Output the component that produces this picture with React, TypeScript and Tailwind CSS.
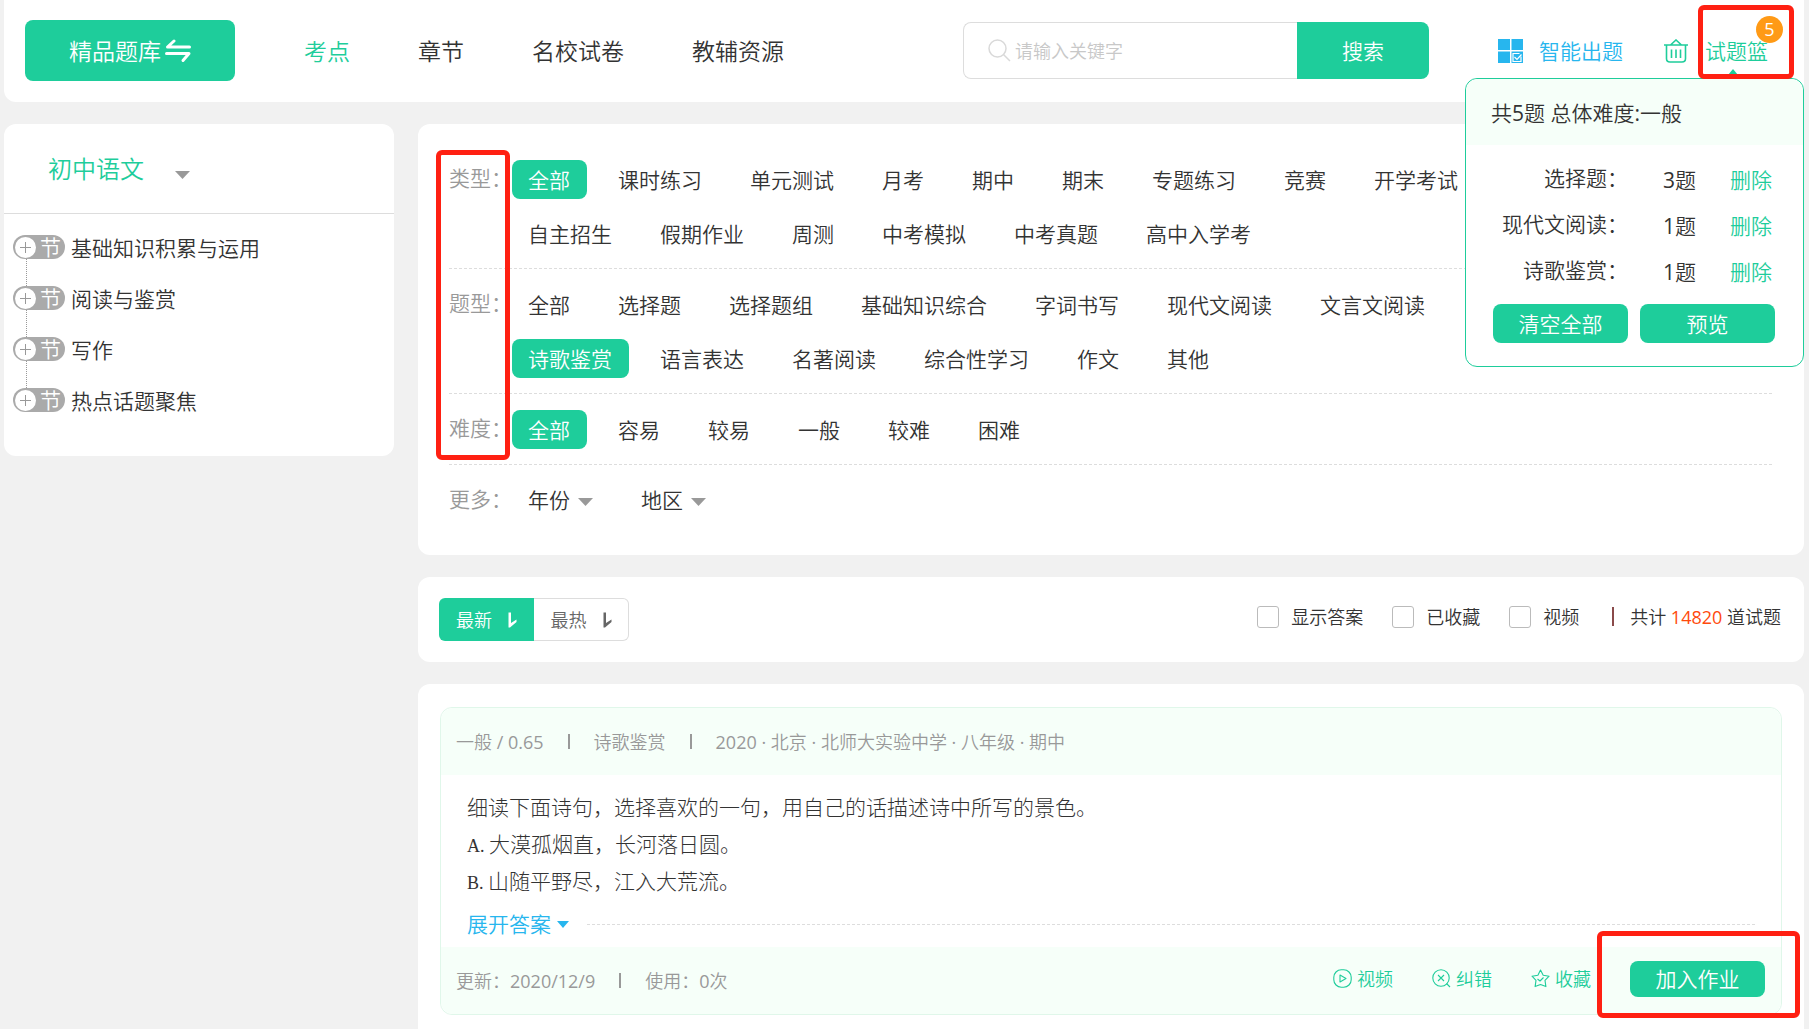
import { useState } from 'react'
import clsx from 'clsx'

interface FilterGroup {
  label: string
  options: string[]
  initial: string
}

const navItems = ['考点', '章节', '名校试卷', '教辅资源']

const chapters = ['基础知识积累与运用', '阅读与鉴赏', '写作', '热点话题聚焦']

const filterGroups: FilterGroup[] = [
  {
    label: '类型',
    options: [
      '全部', '课时练习', '单元测试', '月考', '期中', '期末', '专题练习', '竞赛', '开学考试',
      '自主招生', '假期作业', '周测', '中考模拟', '中考真题', '高中入学考',
    ],
    initial: '全部',
  },
  {
    label: '题型',
    options: [
      '全部', '选择题', '选择题组', '基础知识综合', '字词书写', '现代文阅读', '文言文阅读',
      '诗歌鉴赏', '语言表达', '名著阅读', '综合性学习', '作文', '其他',
    ],
    initial: '诗歌鉴赏',
  },
  {
    label: '难度',
    options: ['全部', '容易', '较易', '一般', '较难', '困难'],
    initial: '全部',
  },
]

const basketRows = [
  { name: '选择题', count: 3 },
  { name: '现代文阅读', count: 1 },
  { name: '诗歌鉴赏', count: 1 },
]

function Caret({ className }: { className?: string }) {
  return (
    <svg viewBox="0 0 15 8" className={clsx('pointer-events-none h-2 w-[15px] fill-[#999]', className)}>
      <path d="M0 0h15L7.500 8z" />
    </svg>
  )
}

function SwapIcon() {
  return (
    <svg viewBox="0 0 26 24" className="h-6 w-[26px]" fill="none" stroke="#fff" strokeWidth="3" strokeLinecap="round">
      <path d="M24.500 8H2.500L9 2" strokeLinejoin="round" />
      <path d="M1.500 14.500H24L18 21.500" strokeLinejoin="round" />
    </svg>
  )
}

function SearchIcon() {
  return (
    <svg viewBox="0 0 23 23" className="size-[23px]" fill="none" stroke="#d9d9d9" strokeWidth="1.500">
      <circle cx="9.500" cy="9.500" r="8.500" />
      <path d="M15.500 15.500l6.500 6.500" />
    </svg>
  )
}

function GridIcon() {
  return (
    <svg viewBox="0 0 25 24" className="h-6 w-[25px]" fill="#27b6ee">
      <path d="M0 0h12v11H0zM13.500 0H25v11H13.500zM0 12.500h12V24H0zM13.500 12.500H25V24H13.500z" />
      <path d="M21.500 14.500h-6.500v8h8v-5" fill="none" stroke="#fff" strokeWidth="1.200" />
      <path d="M16.500 18l2.500 2.500 4.500-5" fill="none" stroke="#fff" strokeWidth="1.200" />
    </svg>
  )
}

function BasketIcon() {
  return (
    <svg viewBox="0 0 24 24" className="size-6" fill="none" stroke="#1ecd9b" strokeWidth="1.600">
      <path d="M0 6h24M6.500 6L12 1l5.500 5" />
      <path d="M2.500 6v13.500q0 3.500 3.500 3.500h12q3.500 0 3.500-3.500V6M7.500 10.500v8.500M12 10.500v8.500M16.500 10.500v8.500" />
    </svg>
  )
}

function SortIcon() {
  return (
    <svg viewBox="0 0 9 16" className="h-4 w-[9px]" fill="currentColor">
      <path d="M0.500 0.500h2.500v10.500l5.500-3.500v2.500L2 15.500H0.500z" />
    </svg>
  )
}

function VideoIcon() {
  return (
    <svg viewBox="0 0 19 19" className="size-[19px]" fill="none" stroke="currentColor" strokeWidth="1.100">
      <rect x="0.800" y="0.800" width="17.400" height="17.400" rx="7.500" />
      <path d="M7 6l6 3.500L7 13z" strokeLinejoin="round" />
    </svg>
  )
}

function ErrorIcon() {
  return (
    <svg viewBox="0 0 19 19" className="size-[19px]" fill="none" stroke="currentColor" strokeWidth="1.100">
      <circle cx="9" cy="9" r="8.200" />
      <path d="M6 6l6 6M12 6l-6 6M14.500 14.500l3.500 3.500" />
    </svg>
  )
}

function StarIcon() {
  return (
    <svg viewBox="0 0 19 19" className="size-[19px]" fill="none" stroke="currentColor" strokeWidth="1.100" strokeLinejoin="round">
      <path d="M9.500 1l2.700 5.200 5.900 1-4.100 4.200.9 6.200-5.400-2-5.400 2 .9-6.200L1 7.200l5.900-1z" />
      <path d="M6.500 10l2.500 2 3.500-3.500" />
    </svg>
  )
}

function Dropdown({ name, options }: { name: string; options: string[] }) {
  return (
    <div className="relative flex items-center">
      <select aria-label={name} className="h-[38px] cursor-pointer appearance-none bg-transparent pr-[23px] outline-none">
        {options.map((option) => (
          <option key={option}>{option}</option>
        ))}
      </select>
      <Caret className="absolute top-[17px] right-0" />
    </div>
  )
}

function Basket() {
  return (
    <div className="absolute top-[78px] right-0 z-10 w-[339px] rounded-xl border border-[#1ecd9b] bg-white pb-[23px]">
      <p className="rounded-t-xl bg-[#f6fff9] pt-[18px] pb-4 pl-[25px] leading-8">共5题 总体难度:一般</p>
      <ul className="pt-3">
        {basketRows.map((row) => (
          <li key={row.name} className="flex h-[46px] items-center leading-8">
            <span className="w-[162px] pb-1 text-right">{row.name}：</span>
            <span className="ml-[35px] w-[67px]">{row.count}题</span>
            <button className="text-[#1ecd9b]">删除</button>
          </li>
        ))}
      </ul>
      <div className="mt-[9px] flex gap-3 pl-[27px] text-white">
        <button className="h-[39px] w-[135px] rounded-lg bg-[#1ecd9b]">清空全部</button>
        <button className="h-[39px] w-[135px] rounded-lg bg-[#1ecd9b]">预览</button>
      </div>
    </div>
  )
}

function Header() {
  const [active, setActive] = useState('考点')

  return (
    <header className="relative flex h-[102px] items-center rounded-b-xl bg-white pr-9 pb-px pl-[21px]">
      <button className="flex h-[61px] w-[210px] items-center justify-center gap-1 rounded-lg bg-[#1ecd9b] text-[23px] text-white">
        精品题库
        <SwapIcon />
      </button>
      <nav className="ml-[69px] flex gap-[68px] text-[23px]">
        {navItems.map((item) => (
          <a
            key={item}
            href="#"
            onClick={() => setActive(item)}
            className={clsx('whitespace-nowrap', item === active && 'text-[#1ecd9b]')}
          >
            {item}
          </a>
        ))}
      </nav>

      <form className="ml-auto flex h-[57px] w-[466px]" onSubmit={(e) => e.preventDefault()}>
        <label className="flex min-w-0 flex-1 items-center gap-1 rounded-l-lg border border-r-0 border-[#ddd] pl-6">
          <SearchIcon />
          <input
            type="text"
            aria-label="关键字"
            placeholder="请输入关键字"
            className="min-w-0 flex-1 text-lg outline-none placeholder:text-[#c8c8c8]"
          />
        </label>
        <button className="w-[132px] rounded-r-lg bg-[#1ecd9b] text-white">搜索</button>
      </form>

      <a href="#" className="ml-[69px] flex items-center gap-4 text-[#27b6ee]">
        <GridIcon />
        智能出题
      </a>
      <a href="#" className="relative ml-[41px] flex items-center gap-[17px] text-[#1ecd9b]">
        <BasketIcon />
        试题篮
        <span className="absolute -top-[19px] -right-[15px] flex size-[27px] items-center justify-center rounded-full bg-[#ff9a16] text-lg text-white">
          5
        </span>
      </a>

      <svg viewBox="0 0 10 6" className="absolute top-[69px] right-[66px] h-[6px] w-[10px] fill-[#1ecd9b]">
        <path d="M0 6L5 0l5 6z" />
      </svg>
      <Basket />
      <div className="pointer-events-none absolute top-[5px] right-[10px] z-20 h-[74px] w-24 rounded-md border-5 border-[#ff2012]" />
    </header>
  )
}

function Sidebar() {
  return (
    <aside className="h-[332px] w-[390px] shrink-0 rounded-xl bg-white">
      <div className="relative flex h-[90px] items-center border-b border-[#ddd] pl-11 text-2xl text-[#1ecd9b]">
        <select aria-label="学科" className="cursor-pointer appearance-none bg-transparent pr-[46px] outline-none">
          <option>初中语文</option>
        </select>
        <Caret className="-ml-[15px] mt-3" />
      </div>
      <ul className="pt-[21px] pl-[9px]">
        {chapters.map((chapter, i) => (
          <li key={chapter}>
            <div className="flex h-6 items-center gap-[6px]">
              <button
                aria-label={`展开${chapter}`}
                className="flex h-6 w-[52px] items-center gap-1 rounded-full bg-[#aaa] pl-[2px] text-white"
              >
                <svg viewBox="0 0 21 21" className="size-[21px]">
                  <circle cx="10.500" cy="10.500" r="10.500" fill="#fff" />
                  <path d="M5 10.500h11M10.500 5v11" stroke="#999" />
                </svg>
                节
              </button>
              <a href="#" className="pt-[2px]">{chapter}</a>
            </div>
            {i < chapters.length - 1 && <div className="ml-[13px] h-[27px] border-l border-dotted border-[#999]" />}
          </li>
        ))}
      </ul>
    </aside>
  )
}

function FilterRow({ group }: { group: FilterGroup }) {
  const [selected, setSelected] = useState(group.initial)

  return (
    <div className="flex border-b border-dashed border-[#ddd] pt-4 pb-[15px]">
      <span className="w-[63px] shrink-0 leading-9 text-[#999]">{group.label}：</span>
      <div className="flex max-w-[1020px] flex-wrap gap-[15px]">
        {group.options.map((option) => (
          <button
            key={option}
            onClick={() => setSelected(option)}
            className={clsx(
              'h-[39px] rounded-lg pr-[17px] pl-4',
              option === selected && 'bg-[#1ecd9b] text-white',
            )}
          >
            {option}
          </button>
        ))}
      </div>
    </div>
  )
}

function Filters() {
  return (
    <section className="relative rounded-xl bg-white pt-5 pr-8 pb-9 pl-[31px]">
      {filterGroups.map((group) => (
        <FilterRow key={group.label} group={group} />
      ))}
      <div className="flex pt-4">
        <span className="w-[63px] shrink-0 leading-9 text-[#999]">更多：</span>
        <div className="flex gap-12 pl-4">
          <Dropdown name="年份" options={['年份']} />
          <Dropdown name="地区" options={['地区']} />
        </div>
      </div>
      <div className="pointer-events-none absolute top-[26px] left-[18px] h-[310px] w-[74px] rounded-md border-5 border-[#ff2012]" />
    </section>
  )
}

function SortBar() {
  return (
    <section className="flex h-[85px] items-center justify-between rounded-xl bg-white pr-[23px] pl-[21px] text-lg">
      <div className="flex h-[43px]">
        <button className="flex w-[95px] items-center justify-center gap-4 rounded-l-md bg-[#1ecd9b] text-white">
          最新
          <SortIcon />
        </button>
        <button className="flex w-[95px] items-center justify-center gap-4 rounded-r-md border border-l-0 border-[#ddd] text-[#666]">
          最热
          <SortIcon />
        </button>
      </div>
      <div className="flex items-center pb-[6px]">
        {['显示答案', '已收藏', '视频'].map((label) => (
          <label key={label} className="mr-[29px] flex items-center gap-3">
            <input type="checkbox" className="size-[22px] appearance-none rounded-[3px] border border-[#bbb] bg-white checked:bg-[#1ecd9b]" />
            {label}
          </label>
        ))}
        <span className="mr-4 ml-1 h-[19px] w-[2px] bg-[#8a4a4a]" />
        <p>
          共计 <span className="text-[#ff4a0c]">14820</span> 道试题
        </p>
      </div>
    </section>
  )
}

function Divider() {
  return <span className="h-[15px] w-[2px] bg-[#999]" />
}

function QuestionCard() {
  return (
    <article className="rounded-xl border border-[#e0f7ea]">
      <div className="flex h-[67px] items-center gap-6 rounded-t-xl bg-[#f6fff9] pl-[15px] text-lg text-[#999]">
        <span>一般 / 0.65</span>
        <Divider />
        <span>诗歌鉴赏</span>
        <Divider />
        <span>2020 · 北京 · 北师大实验中学 · 八年级 · 期中</span>
      </div>
      <div className="pt-[15px] pr-[26px] pl-[26px]">
        <div className="font-['Liberation_Serif','Noto_Sans_CJK_SC',serif] leading-[37px] font-light">
          <p>细读下面诗句，选择喜欢的一句，用自己的话描述诗中所写的景色。</p>
          <p><span className="text-lg font-normal">A. </span>大漠孤烟直，长河落日圆。</p>
          <p><span className="text-lg font-normal">B. </span>山随平野尽，江入大荒流。</p>
        </div>
        <div className="flex h-[46px] items-center gap-[18px]">
          <button className="flex items-center gap-[6px] text-[#27b6ee]">
            展开答案
            <svg viewBox="0 0 12 7" className="h-[7px] w-3 fill-[#27b6ee]">
              <path d="M0 0h12L6 7z" />
            </svg>
          </button>
          <div className="flex-1 border-t border-dashed border-[#ddd]" />
        </div>
      </div>
      <div className="flex h-[67px] items-center gap-6 rounded-b-xl bg-[#f6fff9] pr-4 pl-[15px] text-lg text-[#999]">
        <span>更新：2020/12/9</span>
        <Divider />
        <span>使用：0次</span>
        <div className="ml-auto flex items-center gap-[39px] pb-1 text-[#1ecd9b]">
          <button className="flex items-center gap-[5px]"><VideoIcon />视频</button>
          <button className="flex items-center gap-[5px]"><ErrorIcon />纠错</button>
          <button className="flex items-center gap-[5px]"><StarIcon />收藏</button>
          <button className="h-9 w-[135px] rounded-lg bg-[#1ecd9b] text-[21px] leading-9 text-white">加入作业</button>
        </div>
      </div>
    </article>
  )
}

export default function App() {
  return (
    <div className="flex min-h-screen flex-col bg-[#f1f1f1] pr-[5px] pl-1 font-['Open_Sans','Noto_Sans_CJK_SC_DemiLight','Noto_Sans_CJK_SC',sans-serif] text-[21px] leading-8 text-[#333]">
      <Header />
      <div className="flex flex-1 gap-6 pt-[22px]">
        <Sidebar />
        <main className="flex min-w-0 flex-1 flex-col gap-[22px]">
          <Filters />
          <SortBar />
          <section className="relative flex-1 rounded-t-xl bg-white px-[22px] pt-[23px] pb-3">
            <QuestionCard />
            <div className="pointer-events-none absolute right-1 bottom-[11px] h-[87px] w-[203px] rounded-md border-5 border-[#ff2012]" />
          </section>
        </main>
      </div>
    </div>
  )
}
